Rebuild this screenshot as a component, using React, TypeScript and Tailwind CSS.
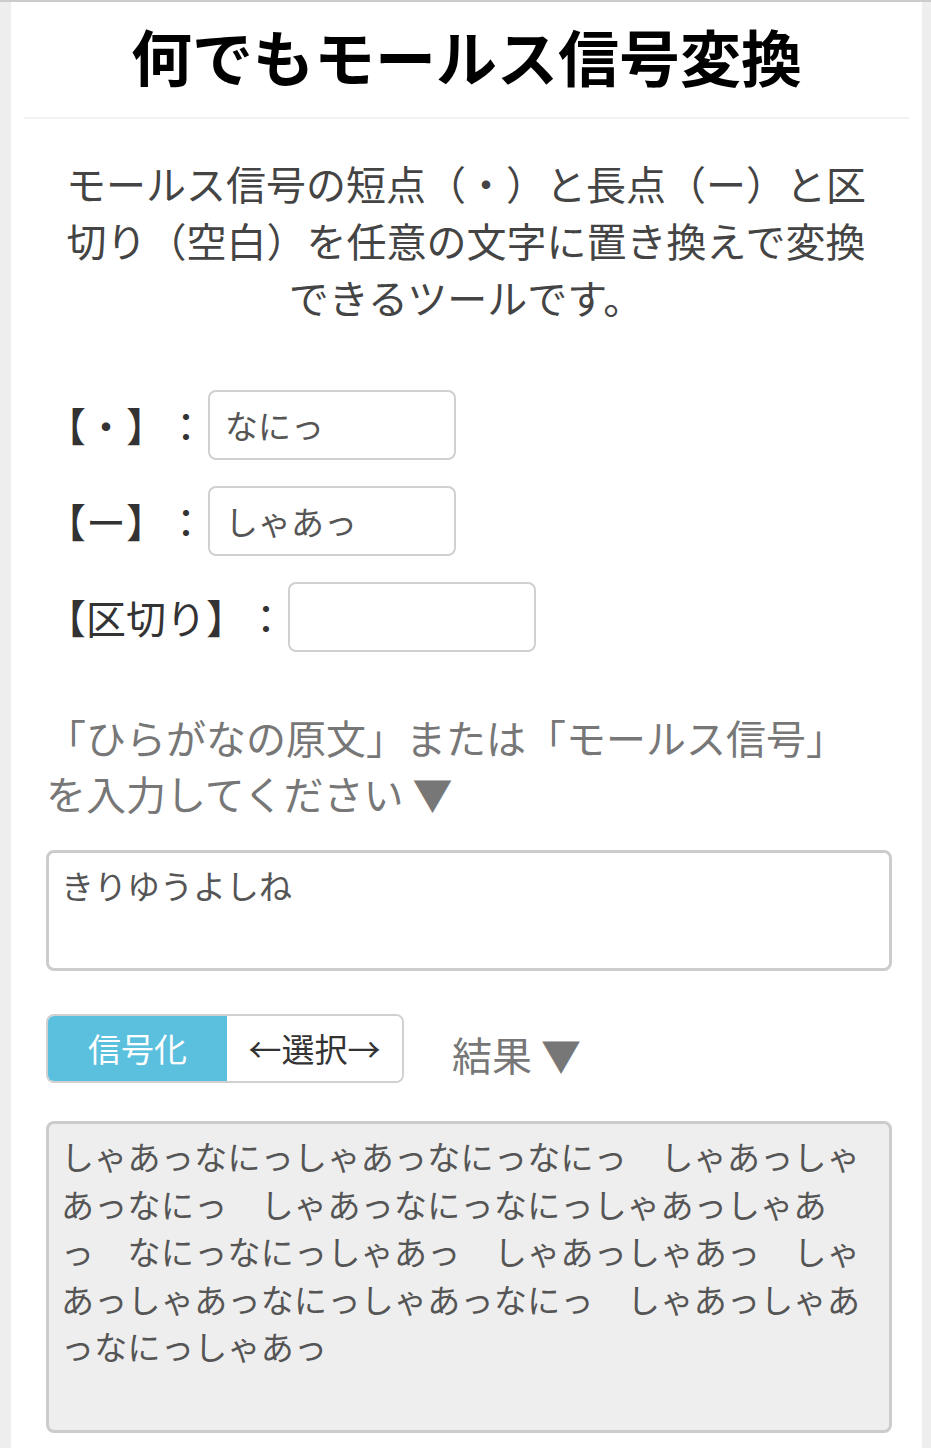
import React from 'react';

const resultLines = [
  'しゃあっなにっしゃあっなにっなにっ　しゃあっしゃ',
  'あっなにっ　しゃあっなにっなにっしゃあっしゃあ',
  'っ　なにっなにっしゃあっ　しゃあっしゃあっ　しゃ',
  'あっしゃあっなにっしゃあっなにっ　しゃあっしゃあ',
  'っなにっしゃあっ',
];

const fields = [
  { label: '【・】：', value: 'なにっ' },
  { label: '【ー】：', value: 'しゃあっ' },
  { label: '【区切り】：', value: '' },
];

const MorseTool = () => {
  return (
    <div className="ml-[11px] mr-[9px] bg-white pb-[15px]">
      {/* header */}
      <header className="h-[115px] flex items-center justify-center">
        <h1 className="text-[61px] font-bold text-black leading-none pb-[8px]">何でもモールス信号変換</h1>
      </header>
      <div className="mx-[13px] h-[2px] bg-[#f2f2f2]" />

      <div className="pl-[35px] pr-[30px]">
        <p className="ml-[20px] w-[800px] mt-[36px] text-center text-[40px] leading-[57px] text-[#444]">
          モールス信号の短点（・）と長点（ー）と区切り（空白）を任意の文字に置き換えで変換できるツールです。
        </p>

        <div className="mt-[64px] flex flex-col gap-[26px]">
          {fields.map(f => (
            <div key={f.label} className="flex items-center">
              <span className="text-[40px] leading-none text-[#333] whitespace-nowrap">{f.label}</span>
              <input
                defaultValue={f.value}
                className="ml-[2px] h-[70px] w-[248px] rounded-[8px] border-2 border-[#d0d0d0] pl-[15px] text-[33px] text-[#555] outline-none"
              />
            </div>
          ))}
        </div>

        <p className="mt-[57px] max-w-[820px] text-[40px] leading-[56px] text-[#777]">
          「ひらがなの原文」または「モールス信号」を入力してください ▼
        </p>

        <textarea
          defaultValue="きりゆうよしね"
          className="mt-[29px] block w-full h-[121px] resize-none rounded-[8px] border-[3px] border-[#ccc] px-[12px] py-[9px] text-[33px] leading-[47.5px] text-[#555] outline-none"
        />

        <div className="mt-[43px] flex items-start">
          <div className="flex h-[69px] w-[358px] overflow-hidden rounded-[8px] border-2 border-[#d0d0d0]">
            <button className="w-[179px] bg-[#5bc0de] text-white text-[33px]">信号化</button>
            <button className="flex-1 bg-white text-[#333] text-[33px]">←選択→</button>
          </div>
          <span className="ml-[48px] mt-[12px] text-[40px] leading-[57px] text-[#777]">結果 ▼</span>
        </div>

        <div className="mt-[38px] h-[312px] rounded-[8px] border-[3px] border-[#ccc] bg-[#eee] px-[12px] py-[9px] text-[33px] leading-[47.5px] tracking-[0.3px] text-[#555]">
          {resultLines.map((line, i) => (
            <div key={i} className="whitespace-pre">{line}</div>
          ))}
        </div>
      </div>
    </div>
  );
};

export default function App() {
  return (
    <div
      className="min-h-screen bg-[#eee] border-t-2 border-[#ccc] [text-spacing-trim:space-all]"
      style={{ fontFamily: '"Noto Sans CJK JP", "Noto Sans", sans-serif' }}
    >
      <MorseTool />
    </div>
  );
}
